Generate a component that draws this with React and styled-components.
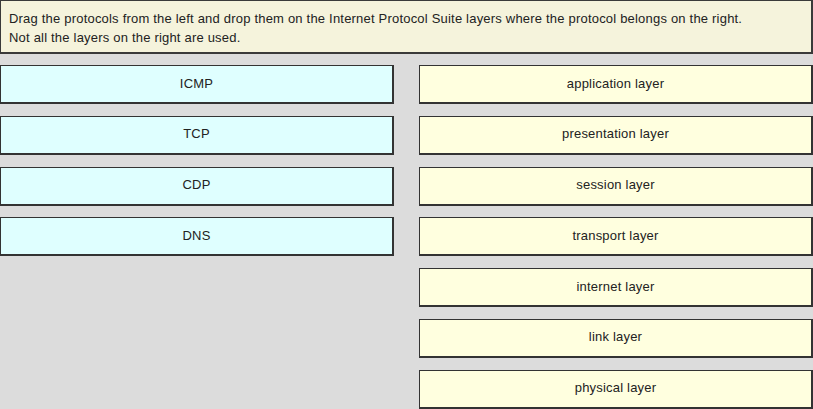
import React from "react";
import styled, { createGlobalStyle } from "styled-components";

const Global = createGlobalStyle`
  html, body { margin: 0; padding: 0; background: #dcdcdc; }
  body { font-family: "Liberation Sans", Arial, sans-serif; }
`;

const Page = styled.div`
  width: 813px;
  height: 409px;
  overflow: hidden;
  display: flex;
  flex-direction: column;
  gap: 11px;
  background: #dcdcdc;
`;

const Instructions = styled.div`
  box-sizing: border-box;
  height: 54px;
  padding: 8px 8px 0 8px;
  background: #f5f3dc;
  border: 1px solid #3a3a3a;
  border-width: 1px 2px 2px 1px;
  font-size: 13px;
  letter-spacing: 0.2px;
  line-height: 19px;
  color: #222;
`;

const Columns = styled.div`
  display: grid;
  grid-template-columns: 394px 394px;
  column-gap: 25px;
  align-items: start;
`;

const Column = styled.div`
  display: flex;
  flex-direction: column;
  gap: 11.8px;
`;

const Tile = styled.div`
  box-sizing: border-box;
  height: 39px;
  display: flex;
  align-items: center;
  justify-content: center;
  padding-bottom: 2px;
  background: ${(p) => (p.$kind === "target" ? "#ffffdf" : "#dfffff")};
  border: 1px solid #333;
  border-width: 1px 2px 2px 1px;
  font-size: 13px;
  letter-spacing: 0.2px;
  color: #222;
`;

const protocols = ["ICMP", "TCP", "CDP", "DNS"];
const layers = [
  "application layer",
  "presentation layer",
  "session layer",
  "transport layer",
  "internet layer",
  "link layer",
  "physical layer",
];

export default function App() {
  return (
    <>
      <Global />
      <Page>
        <Instructions>
          Drag the protocols from the left and drop them on the Internet Protocol Suite layers where the protocol belongs on the right.
          <br />
          Not all the layers on the right are used.
        </Instructions>
        <Columns>
          <Column>
            {protocols.map((p) => (
              <Tile key={p} $kind="source">{p}</Tile>
            ))}
          </Column>
          <Column>
            {layers.map((l) => (
              <Tile key={l} $kind="target">{l}</Tile>
            ))}
          </Column>
        </Columns>
      </Page>
    </>
  );
}
